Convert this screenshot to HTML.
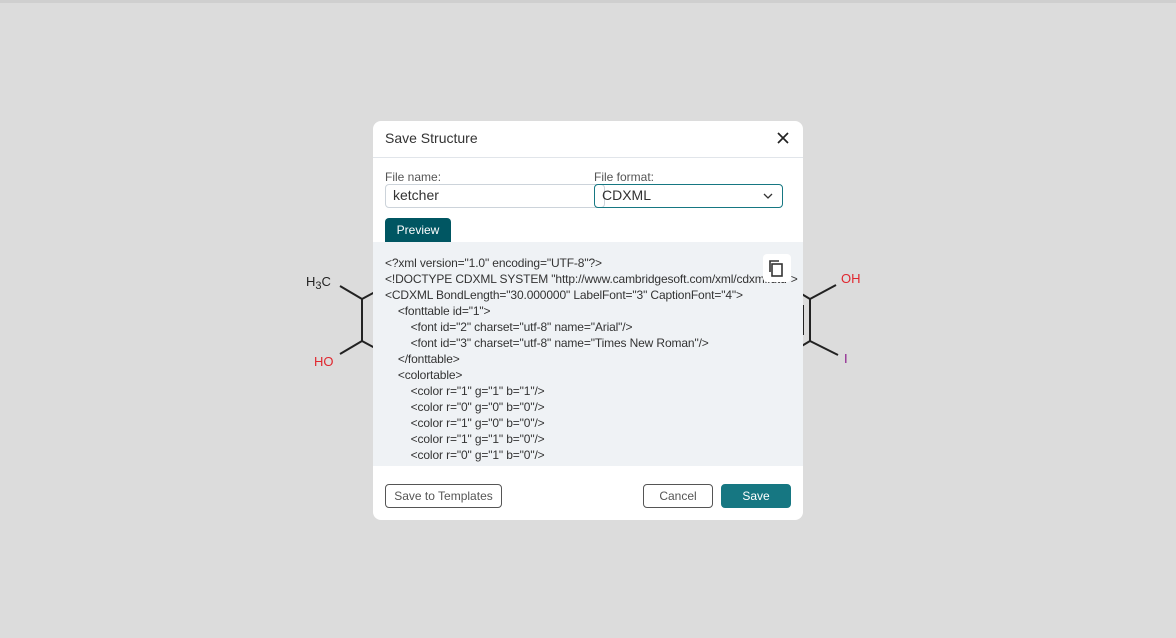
<!DOCTYPE html>
<html><head><style>
*{box-sizing:border-box;margin:0;padding:0}
body{width:1176px;height:638px;overflow:hidden;background:#dcdcdc;font-family:"Liberation Sans",sans-serif;position:relative}
.top{position:absolute;left:0;top:0;width:1176px;height:3px;background:#cfcfcf}
.modal{position:absolute;left:373px;top:121px;width:430px;height:399px;background:#fff;border-radius:8px;overflow:hidden}
.hdr{height:37px;border-bottom:1px solid #e1e5ea;padding:9px 12px;font-size:14px;color:#333}
.x{position:absolute;right:13px;top:10px;width:14px;height:14px}
.lbl{position:absolute;font-size:12px;color:#555}
.inp{position:absolute;height:24px;border:1px solid #ccd3da;border-radius:4px;font-size:14px;color:#333;padding:2px 7px}
.sel{border-color:#167782}
.prev{position:absolute;left:12px;top:97px;width:66px;height:24px;background:#005662;color:#fff;font-size:12px;border-radius:4px 4px 0 0;text-align:center;line-height:24px}
.code{position:absolute;left:0;top:121px;width:430px;height:224px;background:#eff2f5;padding:13px 12px;font-size:12px;color:#333;line-height:16px;white-space:pre;overflow:hidden;letter-spacing:-0.13px}
.copy{position:absolute;left:390px;top:133px;width:28px;height:28px;background:#fff;border-radius:4px}
.btn{position:absolute;top:363px;height:24px;border:1px solid #555;border-radius:4px;font-size:12px;color:#555;text-align:center;line-height:22px;background:#fff}
</style></head><body>
<div class="top"></div>
<svg width="1176" height="638" style="position:absolute;left:0;top:0">
<g stroke="#222" stroke-width="2" fill="none">
<line x1="340" y1="286" x2="362" y2="299"/><line x1="362" y1="299" x2="362" y2="341"/><line x1="362" y1="341" x2="340" y2="354"/>
<line x1="362" y1="299" x2="375" y2="292"/><line x1="362" y1="341" x2="375" y2="348"/>
<line x1="836" y1="285" x2="810" y2="299"/><line x1="810" y1="299" x2="810" y2="341"/><line x1="810" y1="341" x2="838" y2="355"/>
<line x1="803" y1="305" x2="803" y2="335"/><line x1="810" y1="299" x2="800" y2="293"/><line x1="810" y1="341" x2="800" y2="347"/>
</g>
<text x="306" y="286" font-size="13" font-family="Liberation Sans" fill="#222">H<tspan font-size="11" dy="3">3</tspan><tspan dy="-3">C</tspan></text>
<text x="314" y="366" font-size="13" font-family="Liberation Sans" fill="#e0272f">HO</text>
<text x="841" y="283" font-size="13" font-family="Liberation Sans" fill="#e0272f">OH</text>
<text x="844" y="363" font-size="13" font-family="Liberation Sans" fill="#8b1a8b">I</text>
</svg>
<div class="modal">
<div class="hdr">Save Structure</div>
<svg class="x" viewBox="0 0 14 14"><path d="M2 2L12 12M12 2L2 12" stroke="#222" stroke-width="1.7"/></svg>
<div class="lbl" style="left:12px;top:49px">File name:</div>
<div class="lbl" style="left:221px;top:49px">File format:</div>
<div class="inp" style="left:12px;top:63px;width:220px">ketcher</div>
<div class="inp sel" style="left:221px;top:63px;width:189px">CDXML<svg style="position:absolute;right:9px;top:8px" width="10" height="6"><path d="M1 1L5 5L9 1" stroke="#333" fill="none" stroke-width="1.3"/></svg></div>
<div class="prev">Preview</div>
<div class="code">&lt;?xml version="1.0" encoding="UTF-8"?&gt;
&lt;!DOCTYPE CDXML SYSTEM "http://www.cambridgesoft.com/xml/cdxml.dtd"&gt;
&lt;CDXML BondLength="30.000000" LabelFont="3" CaptionFont="4"&gt;
    &lt;fonttable id="1"&gt;
        &lt;font id="2" charset="utf-8" name="Arial"/&gt;
        &lt;font id="3" charset="utf-8" name="Times New Roman"/&gt;
    &lt;/fonttable&gt;
    &lt;colortable&gt;
        &lt;color r="1" g="1" b="1"/&gt;
        &lt;color r="0" g="0" b="0"/&gt;
        &lt;color r="1" g="0" b="0"/&gt;
        &lt;color r="1" g="1" b="0"/&gt;
        &lt;color r="0" g="1" b="0"/&gt;
        &lt;color r="0" g="1" b="1"/&gt;</div>
<div class="copy"><svg width="28" height="28"><rect x="9" y="10" width="10" height="12" fill="none" stroke="#333" stroke-width="1.6"/><path d="M7 18V7h9" fill="none" stroke="#333" stroke-width="1.6"/></svg></div>
<div class="btn" style="left:12px;width:117px">Save to Templates</div>
<div class="btn" style="left:270px;width:70px">Cancel</div>
<div class="btn" style="left:348px;width:70px;background:#167782;border-color:#167782;color:#fff">Save</div>
</div>
</body></html>
